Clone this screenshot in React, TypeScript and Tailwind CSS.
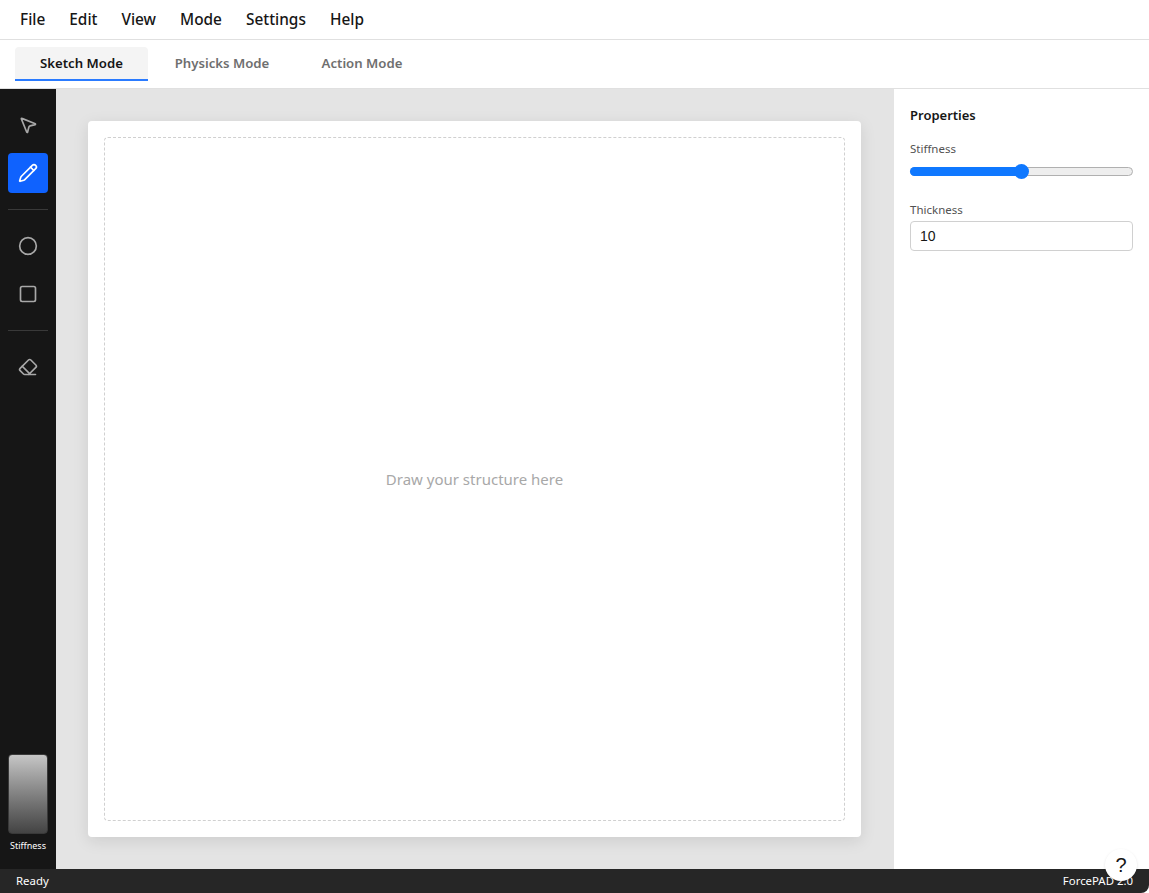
import React from 'react';
import { Circle, Eraser, MousePointer2, Pencil, Square } from 'lucide-react';

const menus = ['File', 'Edit', 'View', 'Mode', 'Settings', 'Help'];
const font = "font-['Noto_Sans',sans-serif]";

const ToolButton: React.FC<{ icon: React.ElementType; active?: boolean }> = ({ icon: Icon, active }) => (
    <button className={`w-10 h-10 rounded flex items-center justify-center ${active ? 'bg-[#0f62fe] text-white' : 'text-[#a8a8a8]'}`}>
        <Icon className="w-5 h-5" strokeWidth={2} />
    </button>
);

const App: React.FC = () => {
    return (
        <div className={`relative w-full h-screen flex flex-col overflow-hidden bg-white ${font}`}>
            {/* Menu bar */}
            <div className="h-10 shrink-0 flex items-center gap-6 px-5 pt-px border-b border-[#e0e0e0] text-[15.4px] font-medium text-[#161616]">
                {menus.map((m) => (
                    <span key={m}>{m}</span>
                ))}
            </div>

            {/* Tabs */}
            <div className="h-[49px] shrink-0 flex items-start pl-[15px] pt-[7px] border-b border-[#e0e0e0] text-[13.2px] font-semibold text-[#6f6f6f]">
                <div className="w-[133px] h-[34px] pt-px flex items-center justify-center bg-[#f4f4f4] rounded-t border-b-2 border-[#2a7bff] text-[#161616]">
                    Sketch Mode
                </div>
                <div className="w-[148px] h-[34px] flex items-center justify-center">Physicks Mode</div>
                <div className="w-[120px] h-[34px] flex items-center justify-center ml-[6px]">Action Mode</div>
            </div>

            <div className="flex-1 flex min-h-0">
                {/* Tool rail */}
                <aside className="w-14 shrink-0 bg-[#161616] flex flex-col items-center gap-2 pt-4 pb-[17px]">
                    <ToolButton icon={MousePointer2} />
                    <ToolButton icon={Pencil} active />
                    <div className="w-10 h-px bg-[#393939] my-2" />
                    <ToolButton icon={Circle} />
                    <ToolButton icon={Square} />
                    <div className="w-10 h-px bg-[#393939] my-2" />
                    <ToolButton icon={Eraser} />
                    <div className="mt-auto flex flex-col items-center gap-[6px]">
                        <div className="w-10 h-20 rounded border border-[#393939] bg-gradient-to-b from-[#c6c6c6] to-[#444444]" />
                        <span className="text-[9px] leading-3 text-white">Stiffness</span>
                    </div>
                </aside>

                {/* Canvas */}
                <main className="flex-1 min-w-0 bg-[#e4e4e4] pl-8 py-8 pr-[33px] flex">
                    <div className="flex-1 bg-white rounded p-4 shadow-[0_4px_16px_rgba(0,0,0,0.1)] flex">
                        <div className="flex-1 rounded border border-dashed border-[#d0d0d0] flex items-center justify-center text-[15px] text-[#a8a8a8]">
                            Draw your structure here
                        </div>
                    </div>
                </main>

                {/* Properties */}
                <aside className="w-[255px] shrink-0 bg-white p-4 text-[#525252]">
                    <h3 className="text-[13px] leading-5 font-semibold text-[#161616] mb-4">Properties</h3>
                    <label className="block text-[11.5px] leading-4 mb-1">Stiffness</label>
                    <div className="relative h-[9px] mt-[10px] mb-[26px] rounded-full border border-[#b0b0b0] bg-[#eeeeee]">
                        <div className="absolute -left-px -top-px h-[9px] w-[112px] rounded-full bg-[#0f78ff]" />
                        <div className="absolute left-[103px] top-[-4px] w-[15px] h-[15px] rounded-full bg-[#0f78ff]" />
                    </div>
                    <label className="block text-[11.5px] leading-4 mb-[3px]">Thickness</label>
                    <div className="h-[30px] rounded border border-[#d0d0d0] px-[9px] flex items-center font-['Liberation_Sans',sans-serif] text-sm text-[#161616]">
                        10
                    </div>
                </aside>
            </div>

            {/* Status bar */}
            <footer className="h-6 shrink-0 bg-[#262626] rounded-br-lg flex items-center justify-between px-4 text-[11.4px] text-white">
                <span>Ready</span>
                <span>ForcePAD 2.0</span>
            </footer>

            <button className="absolute right-3 bottom-3 w-8 h-8 rounded-full bg-white shadow-sm flex items-center justify-center font-['Liberation_Sans',sans-serif] text-xl text-[#161616]">
                ?
            </button>
        </div>
    );
};

export default App;
